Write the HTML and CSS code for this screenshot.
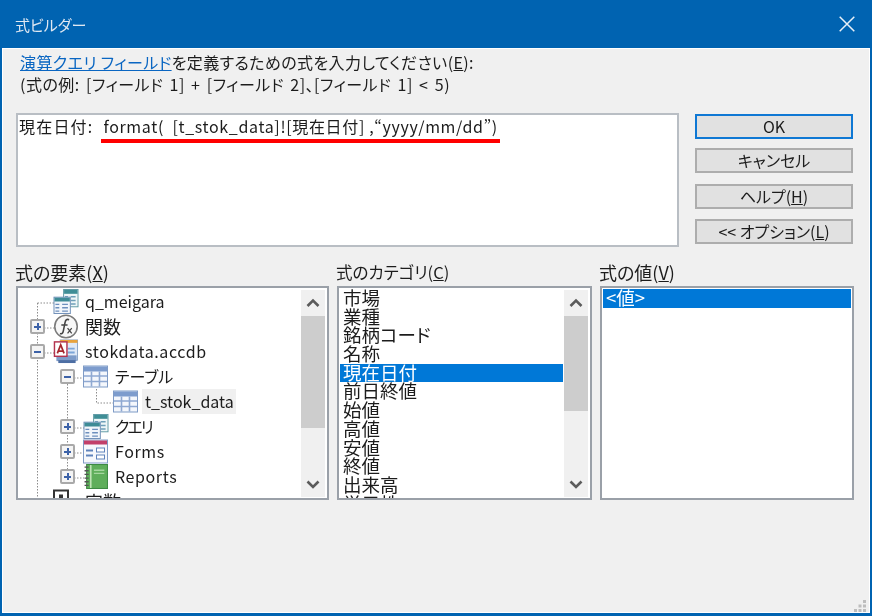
FILE: index.html
```html
<!DOCTYPE html>
<html lang="ja">
<head>
<meta charset="utf-8">
<title>式ビルダー</title>
<link rel="stylesheet" href="styles.css">
</head>
<body>
<svg class="defs" width="0" height="0" aria-hidden="true">
  <symbol id="i-table" viewBox="0 0 26 24">
    <rect x="0.5" y="1.5" width="24" height="21" fill="#f4f7fc" stroke="#7f9bc6"/>
    <rect x="1" y="2" width="23" height="5" fill="#7d9ccd"/>
    <path d="M1 11.5h23M1 17h23M8.5 7v15M16.5 7v15" stroke="#8fa9d2" stroke-width="1.6"/>
  </symbol>
  <symbol id="i-query" viewBox="0 0 26 26">
    <rect x="10.5" y="0.5" width="15" height="18" fill="#eef6f7" stroke="#5f9aa5"/>
    <rect x="11" y="1" width="14" height="4" fill="#3f8e96"/>
    <path d="M12 8h3M18 8h5M12 12h3M18 12h5M12 15.500h3M18 15.500h5" stroke="#6d9fb8" stroke-width="1.500"/>
    <rect x="0.5" y="8.500" width="17" height="17" fill="#f2f6fb" stroke="#6f8fb8"/>
    <rect x="1" y="9" width="16" height="4" fill="#3e8b96"/>
    <path d="M2 16h4M9 16h6M2 19.500h4M9 19.500h6M2 23h4M9 23h6" stroke="#6d8fbd" stroke-width="1.500"/>
  </symbol>
  <symbol id="i-fx" viewBox="0 0 24 24">
    <circle cx="12" cy="12" r="10.800" fill="#f7f7f7" stroke="#7a7a7a" stroke-width="1.500"/>
    <path d="M15 5.500c-2.500-1-3.500.5-4 3l-1.600 8c-.4 2-1.500 3-3.200 2.300M7.500 10.500h6" fill="none" stroke="#444" stroke-width="1.500"/>
    <path d="M13.500 13.500l4 5M17.500 13.500l-4 5" stroke="#444" stroke-width="1.200"/>
  </symbol>
  <symbol id="i-access" viewBox="0 0 26 26">
    <rect x="7" y="1" width="18" height="21" fill="#dfe9f6" stroke="#8aa3c6"/>
    <rect x="7" y="1" width="18" height="3" fill="#e8a33d"/>
    <rect x="3" y="17" width="21" height="6" fill="#7e9cc9"/>
    <rect x="5" y="22" width="18" height="3" fill="#4d6ea3"/>
    <path d="M15 10h7M15 14h7" stroke="#7ca6d8" stroke-width="2"/>
    <rect x="1" y="3" width="13" height="15" fill="#fff" stroke="#b3334f" stroke-width="1.500"/>
    <path d="M4 15l3.500-9 3.500 9M5.200 12.500h4.600" fill="none" stroke="#a4262c" stroke-width="1.800"/>
  </symbol>
  <symbol id="i-form" viewBox="0 0 26 24">
    <rect x="0.500" y="0.500" width="24" height="23" fill="#f6f8fc" stroke="#7f9bc6"/>
    <rect x="1" y="1" width="23" height="4" fill="#c2406a"/>
    <path d="M3 11h7M3 16h7" stroke="#5f83bb" stroke-width="1.800"/>
    <rect x="13.500" y="8.500" width="8" height="4" fill="#fff" stroke="#5f83bb"/>
    <rect x="13.500" y="15.500" width="8" height="4" fill="#fff" stroke="#5f83bb"/>
  </symbol>
  <symbol id="i-report" viewBox="0 0 24 24">
    <rect x="3" y="0.500" width="20" height="23" fill="#5fae5b" stroke="#3d8a43"/>
    <path d="M7 1v22" stroke="#bfe3b5" stroke-width="1.500"/>
    <path d="M1 3h4M1 6.500h4M1 10h4M1 13.500h4M1 17h4M1 20.500h4" stroke="#555" stroke-width="1.300"/>
    <path d="M10 6h10M10 9h10" stroke="#a6d79f" stroke-width="1.300"/>
  </symbol>
  <symbol id="i-const" viewBox="0 0 26 24">
    <rect x="1" y="1" width="14" height="14" fill="#fff" stroke="#333" stroke-width="2"/>
    <rect x="6" y="5" width="4" height="6" fill="#333"/>
  </symbol>
  <symbol id="i-up" viewBox="0 0 24 24">
    <path d="M6.500 15l5.500-5.500 5.500 5.500" fill="none" stroke="#5b5b5b" stroke-width="2.600"/>
  </symbol>
  <symbol id="i-down" viewBox="0 0 24 24">
    <path d="M6.500 9.500l5.500 5.500 5.500-5.500" fill="none" stroke="#5b5b5b" stroke-width="2.600"/>
  </symbol>
</svg>

<div class="window">
  <header class="titlebar">
    <span class="title">式ビルダー</span>
    <svg class="close" width="16" height="16" viewBox="0 0 16 16" aria-hidden="true"><path d="M.7.7l14.600 14.600M15.300.7L.7 15.300" stroke="#e8f0f8" stroke-width="1.500"/></svg>
  </header>

  <main class="content">
    <div class="message">
      <p class="msg-line"><a class="link">演算クエリ フィールド</a>を定義するための式を入力してください(<u>E</u>):</p>
      <p class="msg-line msg-example">(式の例: [フィールド 1] + [フィールド 2]、[フィールド 1] &lt; 5)</p>
    </div>

    <div class="editor-row">
      <div class="editor">
        <span class="expr-name">現在日付:</span><span class="expr">format(  [t_stok_data]![現在日付] ,“yyyy/mm/dd”)</span>
        <span class="red-mark"></span>
      </div>
      <div class="buttons">
        <button class="btn btn-default">OK</button>
        <button class="btn btn-cancel">キャンセル</button>
        <button class="btn btn-help">ヘルプ(<u>H</u>)</button>
        <button class="btn btn-option">&lt;&lt; オプション(<u>L</u>)</button>
      </div>
    </div>

    <div class="panes">
      <section class="pane">
        <h2 class="pane-label label-kanji">式の要素(<u>X</u>)</h2>
        <div class="box">
          <div class="tree">
            <svg class="tree-lines" width="96" height="209" viewBox="0 0 96 209" aria-hidden="true">
              <path class="dots" d="M19.500 14V209M19.500 14H36M26 39H36M26 64H36M49.500 89V189M56 89H66M78.500 100V114H96M56 139H66M56 164H66M56 189H66"/>
            </svg>
            <div class="node"><span class="exp"></span><svg class="ico"><use href="#i-query"/></svg><span class="node-text">q_meigara</span></div>
            <div class="node"><span class="exp plus"></span><svg class="ico"><use href="#i-fx"/></svg><span class="node-text text-kanji">関数</span></div>
            <div class="node"><span class="exp minus"></span><svg class="ico"><use href="#i-access"/></svg><span class="node-text text-wide">stokdata.accdb</span></div>
            <div class="node lv1"><span class="exp minus"></span><svg class="ico"><use href="#i-table"/></svg><span class="node-text">テーブル</span></div>
            <div class="node lv2"><span class="exp"></span><svg class="ico"><use href="#i-table"/></svg><span class="node-text current">t_stok_data</span></div>
            <div class="node lv1"><span class="exp plus"></span><svg class="ico"><use href="#i-query"/></svg><span class="node-text text-narrow">クエリ</span></div>
            <div class="node lv1"><span class="exp plus"></span><svg class="ico"><use href="#i-form"/></svg><span class="node-text text-wide">Forms</span></div>
            <div class="node lv1"><span class="exp plus"></span><svg class="ico"><use href="#i-report"/></svg><span class="node-text text-wide">Reports</span></div>
            <div class="node"><span class="exp"></span><svg class="ico"><use href="#i-const"/></svg><span class="node-text text-kanji">定数</span></div>
          </div>
          <div class="scrollbar">
            <svg class="arrow"><use href="#i-up"/></svg>
            <div class="track"><div class="thumb thumb-tree"></div></div>
            <svg class="arrow"><use href="#i-down"/></svg>
          </div>
        </div>
      </section>

      <section class="pane">
        <h2 class="pane-label label-kana">式のカテゴリ(<u>C</u>)</h2>
        <div class="box">
          <ul class="list">
            <li class="item">市場</li>
            <li class="item">業種</li>
            <li class="item">銘柄コード</li>
            <li class="item">名称</li>
            <li class="item selected">現在日付</li>
            <li class="item">前日終値</li>
            <li class="item">始値</li>
            <li class="item">高値</li>
            <li class="item">安値</li>
            <li class="item">終値</li>
            <li class="item">出来高</li>
            <li class="item">単元株</li>
          </ul>
          <div class="scrollbar">
            <svg class="arrow"><use href="#i-up"/></svg>
            <div class="track"><div class="thumb thumb-cat"></div></div>
            <svg class="arrow"><use href="#i-down"/></svg>
          </div>
        </div>
      </section>

      <section class="pane">
        <h2 class="pane-label label-kanji">式の値(<u>V</u>)</h2>
        <div class="box">
          <ul class="list">
            <li class="item selected">&lt;値&gt;</li>
          </ul>
        </div>
      </section>
    </div>
  </main>

  <svg class="grip" width="14" height="14" viewBox="0 0 14 14" aria-hidden="true">
    <path d="M10 1h3v3h-3zM5.500 5.500h3v3h-3zM10 5.500h3v3h-3zM1 10h3v3H1zM5.500 10h3v3h-3zM10 10h3v3h-3z" fill="#bdbdbd"/>
  </svg>
</div>
</body>
</html>
```

FILE: styles.css
```css
* { box-sizing: border-box; }
html, body { margin: 0; padding: 0; background: #fff; }
body {
  width: 873px;
  height: 616px;
  overflow: hidden;
  font-family: "Noto Sans CJK JP", "Noto Sans", sans-serif;
  font-feature-settings: "palt";
  color: #1c1c1c;
}
.defs { position: absolute; }
.window {
  position: relative;
  width: 872px;
  height: 616px;
  display: flex;
  flex-direction: column;
  background: #f0f0f0;
  border: 2px solid #0063b1;
  border-top: 0;
  border-bottom-width: 3px;
  filter: blur(0.35px);
}
.titlebar {
  height: 48px;
  flex: none;
  margin: 0 -2px;
  padding: 0 17px 0 15px;
  display: flex;
  align-items: center;
  justify-content: space-between;
  background: #0063b1;
}
.title { font-size: 15px; color: #dfe8f2; line-height: 47px; }
.close { display: block; }
.content {
  flex: 1;
  padding: 0 16px 0 14px;
  display: flex;
  flex-direction: column;
  box-shadow: inset 1px 1px 0 #fff, inset -1px -1px 0 #fff;
}
.message { padding: 3px 0 0 4px; }
.msg-line { margin: 0; font-size: 16px; line-height: 22px; white-space: nowrap; letter-spacing: 0.4px; }
.msg-example { letter-spacing: 0.5px; word-spacing: 2.200px; }
.link { color: #0a66c2; text-decoration: underline; }
.editor-row {
  margin-top: 18px;
  display: flex;
  gap: 16px;
  align-items: flex-start;
}
.editor {
  position: relative;
  width: 663px;
  height: 134px;
  padding: 0 1px;
  background: #fff;
  border: 2px solid #b9bec4;
  font-size: 16px;
  line-height: 23px;
  white-space: nowrap;
}
.expr-name { letter-spacing: 1.200px; margin-right: 10px; }
.expr { letter-spacing: 0.65px; white-space: pre; }
.red-mark {
  position: absolute;
  left: 83px;
  top: 24px;
  width: 399px;
  height: 4px;
  background: #f00;
}
.buttons { width: 158px; display: flex; flex-direction: column; padding-top: 1px; }
.btn {
  display: block;
  width: 158px;
  height: 25px;
  padding: 0;
  font: inherit;
  font-size: 16px;
  line-height: 19px;
  color: #1c1c1c;
  background: #e1e1e1;
  border: 2px solid #adadad;
}
.btn-default { border-color: #0f78d4; }
.btn-cancel { margin-top: 9px; }
.btn-help { margin-top: 11px; }
.btn-option { margin-top: 10px; }
.panes {
  margin-top: 15px;
  display: grid;
  grid-template-columns: 313px 255px 254px;
  column-gap: 8px;
}
.pane { min-width: 0; }
.pane-label {
  margin: 0 0 4px -1px;
  font-weight: 400;
  line-height: 20px;
  white-space: nowrap;
}
.label-kanji { font-size: 18px; }
.label-kana { font-size: 16.500px; }
.box {
  display: flex;
  height: 214px;
  background: #fff;
  border: 2px solid #9aa0a8;
  overflow: hidden;
}
.tree {
  position: relative;
  flex: 1;
  min-width: 0;
  height: 209px;
  margin-top: 1px;
  overflow: hidden;
}
.tree-lines { position: absolute; left: 0; top: 0; }
.dots { fill: none; stroke: #8c8c8c; stroke-width: 1; stroke-dasharray: 1.500 1.500; }
.node {
  position: relative;
  height: 25px;
  display: flex;
  align-items: center;
  padding-left: 12px;
  font-size: 16px;
  white-space: nowrap;
}
.lv1 { padding-left: 42px; }
.lv2 { padding-left: 72px; }
.exp {
  flex: none;
  position: relative;
  width: 15px;
  height: 15px;
  margin-right: 8px;
}
.plus, .minus { background: #f4f4f4; border: 2px solid #a9a9a9; border-radius: 2px; }
.plus::before, .minus::before {
  content: "";
  position: absolute;
  left: 2px;
  top: 4.500px;
  width: 7px;
  height: 2px;
  background: #3c62a8;
}
.plus::after {
  content: "";
  position: absolute;
  left: 4.500px;
  top: 2px;
  width: 2px;
  height: 7px;
  background: #3c62a8;
}
.ico { flex: none; width: 26px; height: 25px; margin-right: 3px; }
.node-text { padding: 0 3px; line-height: 25px; }
.text-kanji { font-size: 18px; }
.text-wide { letter-spacing: 0.6px; }
.text-narrow { letter-spacing: -2px; }
.current { background: #f0f0f0; padding-right: 2px; }
.scrollbar {
  flex: none;
  width: 24px;
  height: 207px;
  margin: 2px 2px 0 0;
  display: flex;
  flex-direction: column;
  background: #f0f0f0;
}
.arrow { flex: none; width: 24px; height: 26px; }
.track { flex: 1; }
.thumb { background: #cdcdcd; }
.thumb-tree { height: 112px; }
.thumb-cat { height: 95px; }
.list {
  flex: 1;
  min-width: 0;
  margin: 1px 1px 0;
  padding: 0;
  list-style: none;
}
.item {
  height: 18.700px;
  padding-left: 3px;
  font-size: 18.500px;
  line-height: 17.500px;
  white-space: nowrap;
}
.selected { background: #0078d7; color: #fff; }
.grip { position: absolute; right: 3px; bottom: 0; }
```
